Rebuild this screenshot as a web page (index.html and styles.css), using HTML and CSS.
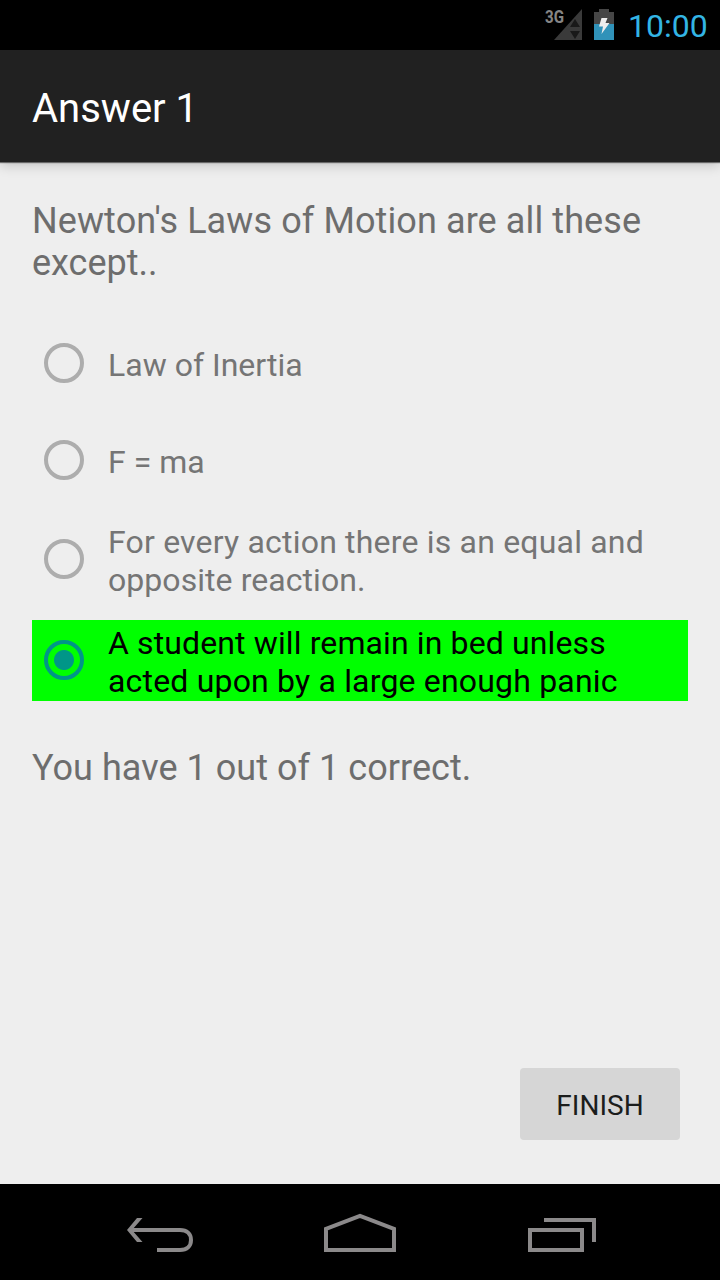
FILE: index.html
```html
<!DOCTYPE html>
<html lang="en">
<head>
<meta charset="utf-8">
<title>Answer 1</title>
<link rel="stylesheet" href="styles.css">
</head>
<body>
<div class="screen">
  <header class="status">
    <svg class="signal" width="40" height="40" viewBox="-2 -6 40 40">
      <path d="M37 1V32H9Z" fill="#3a3a3a"/>
      <path d="M30 11L35 19H25ZM25 23H35L30 31Z" fill="#191919"/>
      <text class="network" x="0" y="15" textLength="19" lengthAdjust="spacingAndGlyphs">3G</text>
    </svg>
    <svg class="battery" width="20" height="31" viewBox="0 0 20 31">
      <path d="M0 3H5V0H15V3H20V15H0Z" fill="#464646"/>
      <path d="M0 15H20V31H0Z" fill="#3092b9"/>
      <path d="M7.500 9H13.500L11.500 14H15.500L7.500 25L9 17.500H5Z" fill="#eee"/>
    </svg>
    <span class="clock">10:00</span>
  </header>
  <div class="appbar"><h1 class="title">Answer 1</h1></div>
  <main class="content">
    <p class="prompt"><span class="q1">Newton's Laws of Motion are all these</span><br><span class="q2">except..</span></p>
    <div class="option short"><span class="radio"></span><span class="label o1">Law of Inertia</span></div>
    <div class="option short second"><span class="radio"></span><span class="label o2">F = ma</span></div>
    <div class="option third"><span class="radio"></span><span class="label"><span class="o3">For every action there is an equal and</span><br><span class="o4">opposite reaction.</span></span></div>
    <div class="option correct"><span class="radio checked"></span><span class="label"><span class="o5">A student will remain in bed unless</span><br><span class="o6">acted upon by a large enough panic</span></span></div>
    <p class="result">You have 1 out of 1 correct.</p>
    <button class="finish"><span>FINISH</span></button>
  </main>
  <nav class="navbar">
    <svg width="720" height="96" viewBox="0 0 720 96" fill="none" stroke="#8b898a" stroke-width="4">
      <path d="M130 46H180C187 46 191 50 191 56S187 66 180 66H157"/>
      <path d="M137 34H142.500L132 46L142.500 58H137L127 46Z" fill="#8b898a" stroke="none"/>
      <path d="M326 66V45L360 32L394 45V66Z"/>
      <path d="M530 46H582V66H530ZM544 36H594V58"/>
    </svg>
  </nav>
</div>
</body>
</html>
```

FILE: styles.css
```css
* { box-sizing: border-box; }
body { margin: 0; background: #eee; font-family: Roboto, "Noto Sans", sans-serif; }
.screen { width: 720px; height: 1280px; display: flex; flex-direction: column; overflow: hidden; white-space: nowrap; }
.status { height: 50px; background: #000; display: flex; align-items: flex-start; padding-left: 543px; }
.signal { margin-top: 2px; }
.network { font: 700 18px Roboto, sans-serif; fill: #858585; }
.battery { margin: 9px 0 0 11px; }
.clock { margin: 7px 0 0 14px; color: #33b5e5; font-size: 32px; line-height: 38px; }
.appbar { position: relative; height: 112px; flex: none; background: #212121; padding: 35px 32px 0; box-shadow: 0 1px 1px rgba(0,0,0,.5), 0 3px 12px rgba(0,0,0,.2); }
.title { margin: 0; color: #fff; font-weight: 400; font-size: 40px; line-height: 48px; }
.content { flex: 1; display: flex; flex-direction: column; padding: 38px 32px 44px; color: #6d6d6d; }
.prompt, .result { margin: 0; font-size: 36px; line-height: 42px; }
.q1 { letter-spacing: .1px; }
.option { display: flex; align-items: center; height: 80px; padding-left: 12px; font-size: 32px; line-height: 38px; color: #757575; }
.short { height: 64px; margin-top: 47px; }
.second { margin-top: 33px; }
.third { margin-top: 27px; }
.correct { height: 81px; padding-bottom: 1px; margin-top: 21px; background: #0f0; color: #000; }
.radio { width: 40px; height: 40px; border: 4px solid #adadad; border-radius: 50%; flex: none; }
.checked { border-color: #009688; background: radial-gradient(circle, #009688 9.500px, transparent 10.500px); }
.label { margin-left: 24px; padding-top: 4px; }
.third .label, .correct .label { padding-top: 3px; }
.o3 { letter-spacing: .19px; }
.o4 { letter-spacing: .06px; }
.o5 { letter-spacing: .12px; }
.o6 { letter-spacing: .18px; }
.result { margin-top: 46px; letter-spacing: .04px; }
.finish { align-self: flex-end; margin: auto 8px 0 0; width: 160px; height: 72px; padding: 4px 0 0; border: 0; border-radius: 4px; background: #d6d6d6; color: #1b1d1c; font: 400 28px/34px Roboto, "Noto Sans", sans-serif; }
.navbar { height: 96px; background: #000; }
.navbar svg { display: block; }
```
